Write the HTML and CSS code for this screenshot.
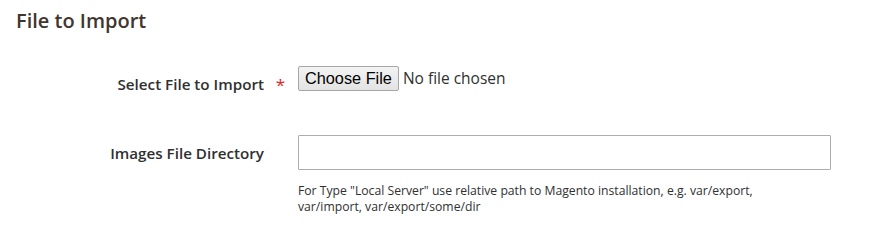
FILE: index.html
```html
<!DOCTYPE html>
<html lang="en">
<head>
<meta charset="utf-8">
<title>File to Import</title>
<link rel="stylesheet" href="styles.css">
</head>
<body>
<fieldset class="fieldset">
  <legend class="legend">File to Import</legend>
  <div class="fields">
    <div class="field required">
      <label class="label" for="import_file">Select File to Import</label>
      <div class="control">
        <input class="file" type="file" id="import_file">
      </div>
    </div>
    <div class="field">
      <label class="label" for="import_images_file_dir">Images File Directory</label>
      <div class="control">
        <input class="text" type="text" id="import_images_file_dir">
        <div class="note">For Type "Local Server" use relative path to Magento installation, e.g. var/export, var/import, var/export/some/dir</div>
      </div>
    </div>
  </div>
</fieldset>
</body>
</html>
```

FILE: styles.css
```css
html, body {
  margin: 0;
  padding: 0;
  background: #ffffff;
}
body {
  font-family: "Open Sans", "Liberation Sans", sans-serif;
  color: #303030;
  font-size: 14px;
}
.fieldset {
  margin: 0;
  padding: 9px 16px 0 16px;
  border: 0;
  min-width: 0;
}
.legend {
  float: left;
  width: 100%;
  padding: 0;
  margin: 0 0 33px 0;
  font-size: 20px;
  line-height: 24px;
  font-weight: 600;
  color: #41362f;
}
.fields {
  clear: both;
  display: grid;
  grid-template-columns: 282px 533px;
  row-gap: 41px;
}
.field {
  display: contents;
}
.label {
  position: relative;
  text-align: right;
  padding: 8px 34px 0 0;
  font-weight: 600;
  font-size: 15.2px;
  line-height: 20px;
  color: #303030;
  white-space: nowrap;
}
.required .label::after {
  content: "*";
  position: absolute;
  right: 13px;
  top: 9px;
  color: #e22626;
  font-size: 17px;
  font-weight: 400;
  line-height: 19px;
}
.control {
  display: flex;
  flex-direction: column;
  align-items: flex-start;
}
.file {
  font-family: "Open Sans", sans-serif;
  font-size: 15.5px;
  color: #303030;
  height: 25px;
  padding: 0;
  margin: 0;
  line-height: 25px;
}
.file::file-selector-button {
  font-family: "Liberation Sans", Arial, sans-serif;
  font-size: 16.3px;
  color: #000000;
  height: 25px;
  padding: 0 6px;
  margin: 0 4px 0 0;
  border: 1px solid #a6a6a6;
  border-radius: 2px;
  background: linear-gradient(#f3f3f3, #e3e3e3);
}
.text {
  box-sizing: border-box;
  width: 533px;
  height: 35px;
  margin: 0;
  padding: 0 10px;
  border: 1px solid #adadad;
  border-radius: 1px;
  font-family: "Open Sans", sans-serif;
  font-size: 14px;
  background: #ffffff;
}
.note {
  margin-top: 13px;
  font-size: 12.2px;
  line-height: 16px;
  color: #303030;
  width: 480px;
}
```
